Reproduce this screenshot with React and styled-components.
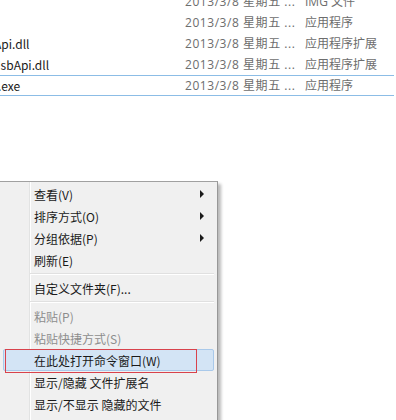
import React from 'react';
import styled, { createGlobalStyle } from 'styled-components';

const Global = createGlobalStyle`
  html, body { margin: 0; padding: 0; background: #ffffff; }
  body {
    width: 396px; height: 420px; overflow: hidden;
    font-family: "Noto Sans CJK SC", "Microsoft YaHei", sans-serif;
    font-size: 12px;
  }
`;

const Page = styled.div`
  width: 396px;
  height: 420px;
  overflow: hidden;
  background: #fff;
`;

const List = styled.div`
  margin-top: -9px;
`;

const Row = styled.div`
  display: grid;
  grid-template-columns: 185px 120px 1fr;
  align-items: center;
  height: 21px;
  box-sizing: border-box;
  border-top: 1px solid ${p => (p.$selected ? '#8cbde6' : 'transparent')};
  border-bottom: 1px solid ${p => (p.$selected ? '#8cbde6' : 'transparent')};
  margin-right: 2px;
  line-height: 19px;
  white-space: nowrap;
`;

const NameCell = styled.div`
  overflow: hidden;
  color: #1a1a1a;
`;

const Name = styled.span`
  display: inline-block;
`;

const Cell = styled.div`
  color: #6d6d6d;
  overflow: hidden;
  font-family: "Open Sans", "Noto Sans CJK SC", sans-serif;
  letter-spacing: ${p => (p.$spaced ? '0.55px' : '0')};
`;

const Menu = styled.div`
  position: relative;
  margin-top: 85px;
  width: 218px;
  height: 260px;
  box-sizing: border-box;
  background: #f0f0f0;
  border-top: 1px solid #a0a0a0;
  border-right: 1px solid #979797;
  box-shadow: 3px 3px 3px rgba(0, 0, 0, 0.28);
  padding: 1px 0 2px;
  &::before {
    content: '';
    position: absolute;
    left: 29px; top: 0; bottom: 0;
    width: 1px;
    background: #e2e3e3;
  }
  &::after {
    content: '';
    position: absolute;
    left: 30px; top: 0; bottom: 0;
    width: 1px;
    background: #ffffff;
  }
`;

const Item = styled.div`
  position: relative;
  z-index: 1;
  display: flex;
  align-items: center;
  height: 22px;
  box-sizing: border-box;
  margin: 0 3px 0 3px;
  padding: 0 9px 0 30px;
  color: ${p => (p.$disabled ? '#8d8d8d' : '#1a1a1a')};
  background: ${p => (p.$hover ? '#d3e4f5' : 'transparent')};
  border: 1px solid ${p => (p.$hover ? '#a9c9ea' : 'transparent')};
  border-radius: 2px;
  white-space: nowrap;
`;

const Label = styled.span`
  flex: 1;
`;

const Arrow = styled.span`
  width: 0; height: 0;
  border-top: 4px solid transparent;
  border-bottom: 4px solid transparent;
  border-left: 4px solid #1a1a1a;
`;

const Separator = styled.div`
  position: relative;
  z-index: 1;
  height: 6px;
  margin: 0 3px 0 30px;
  display: flex;
  flex-direction: column;
  justify-content: center;
  &::before { content: ''; display: block; height: 1px; background: #e0e0e0; }
  &::after { content: ''; display: block; height: 1px; background: #ffffff; }
`;

const RedMark = styled.div`
  position: absolute;
  left: 1px; top: -1px;
  width: 192px; height: 24px;
  box-sizing: border-box;
  border: 1.5px solid #d8424c;
  pointer-events: none;
`;

const rows = [
  { name: '', offset: 0, date: '2013/3/8 星期五 ...', type: 'IMG 文件' },
  { name: '', offset: 0, date: '2013/3/8 星期五 ...', type: '应用程序' },
  { name: 'Api.dll', offset: -6, date: '2013/3/8 星期五 ...', type: '应用程序扩展' },
  { name: 'UsbApi.dll', offset: -8, date: '2013/3/8 星期五 ...', type: '应用程序扩展' },
  { name: '.exe', offset: -2, date: '2013/3/8 星期五 ...', type: '应用程序', selected: true },
];

const menu = [
  { label: '查看(V)', arrow: true },
  { label: '排序方式(O)', arrow: true },
  { label: '分组依据(P)', arrow: true },
  { label: '刷新(E)' },
  { sep: true },
  { label: '自定义文件夹(F)...' },
  { sep: true },
  { label: '粘贴(P)', disabled: true },
  { label: '粘贴快捷方式(S)', disabled: true },
  { label: '在此处打开命令窗口(W)', hover: true, mark: true },
  { label: '显示/隐藏 文件扩展名' },
  { label: '显示/不显示 隐藏的文件' },
];

export default function App() {
  return (
    <Page>
      <Global />
      <List>
        {rows.map((r, i) => (
          <Row key={i} $selected={r.selected}>
            <NameCell>
              <Name style={{ marginLeft: r.offset }}>{r.name}</Name>
            </NameCell>
            <Cell $spaced>{r.date}</Cell>
            <Cell>{r.type}</Cell>
          </Row>
        ))}
      </List>
      <Menu>
        {menu.map((m, i) =>
          m.sep ? (
            <Separator key={i} />
          ) : (
            <Item key={i} $disabled={m.disabled} $hover={m.hover}>
              <Label>{m.label}</Label>
              {m.arrow && <Arrow />}
              {m.mark && <RedMark />}
            </Item>
          )
        )}
      </Menu>
    </Page>
  );
}
